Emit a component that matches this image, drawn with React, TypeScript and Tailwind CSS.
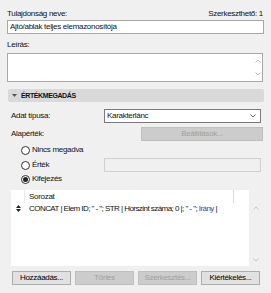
import React from "react"

function Chevron({ up = false, className = "" }: { up?: boolean; className?: string }) {
  return (
    <svg width="6" height="4" viewBox="0 0 6 4" className={className}>
      <path d={up ? "M0.5 3.5 L3 1 L5.5 3.5" : "M0.5 0.5 L3 3 L5.5 0.5"} fill="none" stroke="currentColor" strokeWidth="0.9" />
    </svg>
  )
}

function Radio({ checked = false }: { checked?: boolean }) {
  return (
    <span className="w-[9px] h-[9px] rounded-full border border-[#333] bg-white flex items-center justify-center shrink-0">
      {checked && <span className="w-[5px] h-[5px] rounded-full bg-[#222]" />}
    </span>
  )
}

function Btn({ label, disabled = false }: { label: string; disabled?: boolean }) {
  return (
    <div
      className={
        disabled
          ? "w-[59px] h-[14px] flex items-center justify-center border border-[#bfbfbf] bg-[#cccccc] text-[#a0a0a0]"
          : "w-[59px] h-[14px] flex items-center justify-center border border-[#adadad] bg-[#e1e1e1] text-black"
      }
    >
      {label}
    </div>
  )
}

export default function App() {
  return (
    <div className="w-[271px] h-[293px] bg-[#f0f0f0] px-[7px] text-[8px] tracking-[-0.3px] text-[#111] font-['Liberation_Sans',Arial,sans-serif] leading-none overflow-hidden">
      {/* name */}
      <div className="pt-[8px] h-[19px] flex justify-between items-center pr-[1px]">
        <span>Tulajdonság neve:</span>
        <span>Szerkeszthető: 1</span>
      </div>
      <div className="mt-[1px] w-[257px] h-[14px] border border-[#a8a8a8] bg-white flex items-center px-[2px]">
        Ajtó/ablak teljes elemazonosítója
      </div>

      {/* description */}
      <div className="mt-[5px] h-[11px] flex items-center">Leírás:</div>
      <div className="mt-[3px] w-[256px] h-[29px] border border-[#a8a8a8] bg-white flex justify-end">
        <div className="w-[9px] flex flex-col items-center justify-between py-[5px] text-[#b5b5b5]">
          <Chevron up />
          <Chevron />
        </div>
      </div>

      {/* section */}
      <div className="mt-[7px] ml-[1px] w-[256px] h-[13px] bg-[#d9d9d9] rounded-[2px] flex items-center pl-[4px] gap-[4px]">
        <svg width="5" height="3" viewBox="0 0 5 3">
          <path d="M0 0 H5 L2.5 3 Z" fill="#555" />
        </svg>
        <span className="font-bold text-[7px] tracking-[-0.4px]">ÉRTÉKMEGADÁS</span>
      </div>

      <div className="pl-[4px]">
        <div className="mt-[7px] h-[14px] flex items-center">
          <span className="w-[93px]">Adat típusa:</span>
          <div className="w-[157px] h-[14px] border border-[#7a7a7a] bg-white flex items-center justify-between px-[2px]">
            <span>Karakterlánc</span>
            <Chevron className="text-[#555] mr-[2px]" />
          </div>
        </div>

        <div className="mt-[4px] h-[14px] flex items-center justify-between pr-[1px]">
          <span>Alapérték:</span>
          <div className="w-[122px] h-[14px] border border-[#bfbfbf] bg-[#cccccc] text-[#a0a0a0] flex items-center justify-center">
            Beállítások...
          </div>
        </div>

        <div className="mt-[2px] h-[14px] flex items-center pl-[10px] gap-[2px]">
          <Radio />
          <span>Nincs megadva</span>
        </div>
        <div className="mt-[1px] h-[14px] flex items-center">
          <div className="w-[93px] flex items-center pl-[10px] gap-[2px]">
            <Radio />
            <span>Érték</span>
          </div>
          <div className="w-[157px] h-[14px] border border-[#cfcfcf] bg-[#f0f0f0]" />
        </div>
        <div className="h-[14px] flex items-center pl-[10px] gap-[2px]">
          <Radio checked />
          <span>Kifejezés</span>
        </div>

        {/* expression list */}
        <div className="mt-[4px] w-[251px] h-[76px] flex">
          <div className="flex-1 bg-white flex flex-col">
            <div className="h-[13px] flex items-stretch">
              <div className="w-[14px] border-r border-[#ececec]" />
              <div className="flex-1 flex items-center pl-[4px]">Sorozat</div>
              <div className="w-[16px] border-l border-[#dcdcdc]" />
            </div>
            <div className="h-[11px] flex items-center whitespace-nowrap">
              <div className="w-[14px] flex justify-center">
                <svg width="5" height="7" viewBox="0 0 5 7">
                  <path d="M0 3 L2.5 0 L5 3 Z M0 4 L2.5 7 L5 4 Z" fill="#222" />
                </svg>
              </div>
              <span className="pl-[4px] tracking-[-0.55px]">
                CONCAT | Elem ID; " - "; STR | Horszint száma; 0 |; " - ";{" "}
                <span className="text-[#4a3f8f]">Irány</span> |
              </span>
            </div>
          </div>
          <div className="w-[13px] flex flex-col items-center justify-between pt-[16px] pb-[4px] text-[#bdbdbd]">
            <Chevron up />
            <Chevron />
          </div>
        </div>

        {/* buttons */}
        <div className="mt-[5px] pl-[1px] flex gap-[4px]">
          <Btn label="Hozzáadás..." />
          <Btn label="Törlés" disabled />
          <Btn label="Szerkesztés..." disabled />
          <Btn label="Kiértékelés..." />
        </div>
      </div>
    </div>
  )
}
